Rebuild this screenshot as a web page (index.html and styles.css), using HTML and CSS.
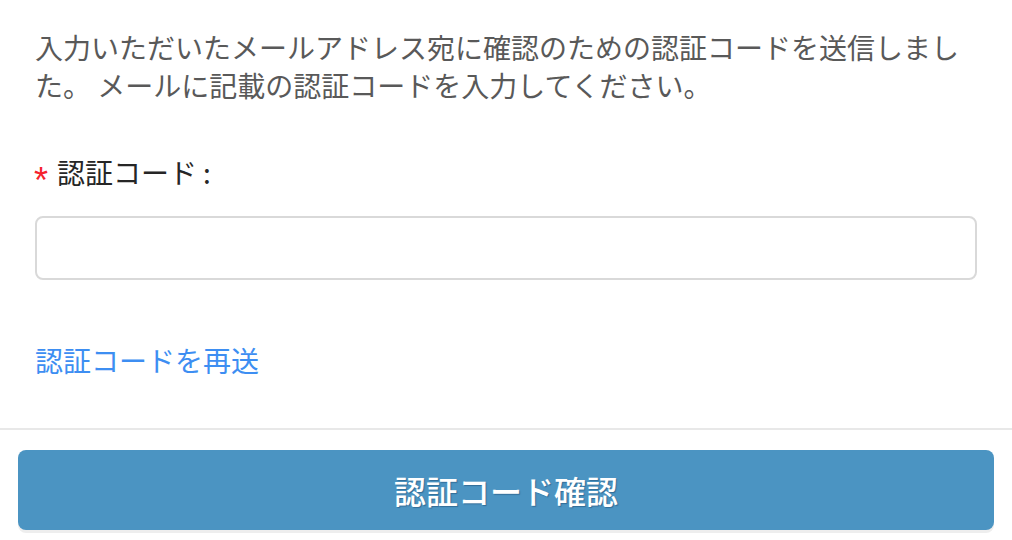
FILE: index.html
```html
<!DOCTYPE html>
<html lang="ja">
<head>
<meta charset="utf-8">
<title>認証コード確認</title>
<link rel="stylesheet" href="styles.css">
</head>
<body>
<main class="page">
  <section class="content">
    <p class="intro">入力いただいたメールアドレス宛に確認のための認証コードを送信しました。 メールに記載の認証コードを入力してください。</p>
    <form class="form">
      <label class="label" for="code"><span class="req">*</span>認証コード<span class="colon">:</span></label>
      <input class="input" id="code" type="text">
      <a class="resend" href="#">認証コードを再送</a>
    </form>
  </section>
  <footer class="footer">
    <button class="btn" type="button">認証コード確認</button>
  </footer>
</main>
</body>
</html>
```
FILE: styles.css
```css
html, body {
  margin: 0;
  padding: 0;
  background: #ffffff;
}
body {
  font-family: "Noto Sans CJK JP", "Noto Sans", sans-serif;
  font-size: 28px;
  line-height: 38px;
}
.page {
  display: flex;
  flex-direction: column;
}
.content {
  padding: 28px 35px 49px;
  border-bottom: 2px solid #e8e8e8;
}
.intro {
  margin: 0;
  color: #595959;
}
.form {
  display: flex;
  flex-direction: column;
  margin-top: 49px;
}
.label {
  color: #262626;
  display: flex;
  align-items: center;
}
.req {
  color: #f5222d;
  font-family: "Liberation Sans", sans-serif;
  font-size: 36px;
  line-height: 38px;
  width: 22px;
  position: relative;
  top: 9px;
  left: -1px;
}
.colon {
  margin-left: 6px;
}
.input {
  margin-top: 25px;
  height: 64px;
  box-sizing: border-box;
  border: 2px solid #d9d9d9;
  border-radius: 8px;
  background: #fff;
  font: inherit;
  padding: 0 20px;
  outline: none;
}
.resend {
  margin-top: 61px;
  color: #3d8ef2;
  text-decoration: none;
  align-self: flex-start;
}
.footer {
  padding: 20px 18px 10px;
}
.btn {
  width: 100%;
  height: 80px;
  border: 0;
  border-radius: 8px;
  background: #4b94c2;
  color: #ffffff;
  font-family: "Noto Sans CJK JP", "Noto Sans", sans-serif;
  font-size: 32px;
  font-weight: 500;
  text-shadow: 1px 1px 1px rgba(20, 60, 100, 0.45);
  box-shadow: 0 3px 0 #eeeeee;
  cursor: pointer;
}
```
